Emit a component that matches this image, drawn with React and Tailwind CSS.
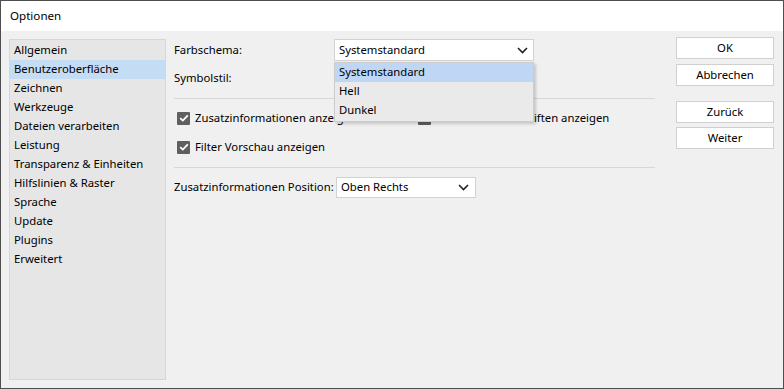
import React from "react";

const NAV = [
    "Allgemein",
    "Benutzeroberfläche",
    "Zeichnen",
    "Werkzeuge",
    "Dateien verarbeiten",
    "Leistung",
    "Transparenz & Einheiten",
    "Hilfslinien & Raster",
    "Sprache",
    "Update",
    "Plugins",
    "Erweitert",
];

const Chevron = () => (
    <svg width="11" height="7" viewBox="0 0 11 7" className="shrink-0">
        <path d="M1 1 L5.5 5.5 L10 1" fill="none" stroke="#222" strokeWidth="1.6" />
    </svg>
);

const Check = ({ label }) => (
    <div className="flex items-center gap-[5px] h-[18px]">
        <div className="w-[13px] h-[13px] bg-[#5f5f5f] rounded-[1px] flex items-center justify-center">
            <svg width="10" height="8" viewBox="0 0 10 8">
                <path d="M1.2 4.2 L3.8 6.6 L8.8 1.4" fill="none" stroke="#fff" strokeWidth="1.8" />
            </svg>
        </div>
        <span>{label}</span>
    </div>
);

const Btn = ({ children, className = "" }) => (
    <button className={`w-[98px] h-[22px] bg-white border border-[#d0d0d0] flex items-center justify-center ${className}`}>
        {children}
    </button>
);

export default function App() {
    return (
        <div
            className="w-[784px] h-[389px] border border-[#4f4f4f] flex flex-col text-[11.3px] text-black overflow-hidden"
            style={{ fontFamily: '"Noto Sans", "Segoe UI", sans-serif' }}
        >
            {/* title bar */}
            <div className="h-[30px] bg-white flex items-center px-[9px] shrink-0 text-[11.6px]">Optionen</div>

            <div className="flex-1 bg-[#f0f0f0] flex pt-[8px] pb-[8px] pl-[8px] pr-[9px]">
                {/* nav list */}
                <div className="w-[157px] bg-[#e6e6e6] border border-[#d6d6d6] pt-[1px] shrink-0">
                    {NAV.map((n, i) => (
                        <div
                            key={n}
                            className={`h-[19px] flex items-center pl-[4px] ${i === 1 ? "bg-[#c5dcf5]" : ""}`}
                        >
                            {n}
                        </div>
                    ))}
                </div>

                {/* content */}
                <div className="ml-[8px] w-[481px] relative shrink-0">
                    <div className="flex items-center h-[22px]">
                        <span className="w-[160px]">Farbschema:</span>
                        <div className="w-[200px] h-[22px] bg-white border border-[#d2d2d2] flex items-center justify-between pl-[4px] pr-[5px]">
                            <span>Systemstandard</span>
                            <Chevron />
                        </div>
                    </div>
                    <div className="flex items-center h-[22px] mt-[6px]">
                        <span className="w-[160px]">Symbolstil:</span>
                    </div>
                    <div className="h-px bg-[#d7d7d7] mt-[9px]" />

                    <div className="pl-[3px] mt-[10px] grid grid-cols-[241px_1fr]">
                        <Check label="Zusatzinformationen anzeigen" />
                        <Check label="Vorschau von Schriften anzeigen" />
                    </div>
                    <div className="pl-[3px] mt-[11px]">
                        <Check label="Filter Vorschau anzeigen" />
                    </div>
                    <div className="h-px bg-[#d7d7d7] mt-[11px]" />

                    <div className="flex items-center mt-[9px] h-[21px]">
                        <span className="w-[162px]">Zusatzinformationen Position:</span>
                        <div className="w-[140px] h-[21px] bg-white border border-[#d2d2d2] flex items-center justify-between pl-[4px] pr-[6px]">
                            <span>Oben Rechts</span>
                            <Chevron />
                        </div>
                    </div>

                    {/* open dropdown popup */}
                    <div className="absolute left-[160px] top-[23px] w-[200px] bg-[#eaeaea] border border-[#cccccc] shadow-[2px_2px_3px_rgba(0,0,0,0.18)] pb-[1px]">
                        <div className="h-[19px] bg-[#bfd7f4] flex items-center pl-[4px]">Systemstandard</div>
                        <div className="h-[19px] flex items-center pl-[4px]">Hell</div>
                        <div className="h-[19px] flex items-center pl-[4px]">Dunkel</div>
                    </div>
                </div>

                {/* buttons */}
                <div className="ml-auto flex flex-col -mt-[2px]">
                    <Btn>OK</Btn>
                    <Btn className="mt-[5px]">Abbrechen</Btn>
                    <Btn className="mt-[15px]">Zurück</Btn>
                    <Btn className="mt-[4px]">Weiter</Btn>
                </div>
            </div>
        </div>
    );
}
